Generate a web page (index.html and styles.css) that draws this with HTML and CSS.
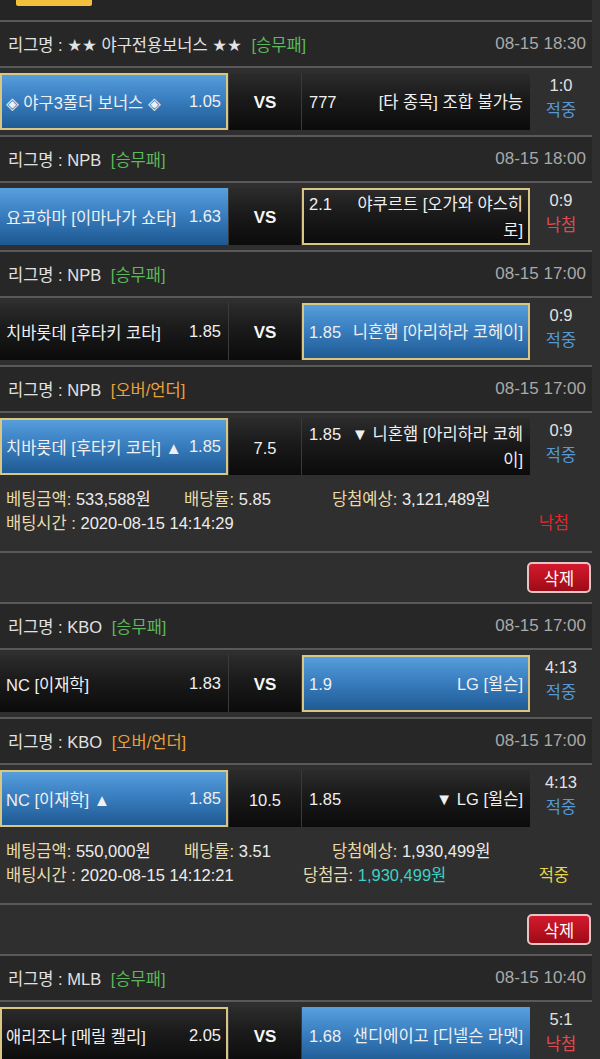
FILE: index.html
```html
<!DOCTYPE html>
<html lang="ko">
<head>
<meta charset="utf-8">
<title>베팅내역</title>
<link rel="stylesheet" href="styles.css">
</head>
<body>
<div class="page">
  <div class="topbar"><div class="tab-yellow"></div></div>

  <div class="game">
    <div class="league">
      <div class="lname">리그명 : ★★ 야구전용보너스 ★★ <span class="type wdl">[승무패]</span></div>
      <div class="date">08-15 18:30</div>
    </div>
    <div class="match">
      <div class="cell home on picked"><span class="team">◈ 야구3폴더 보너스 ◈</span><span class="odd">1.05</span></div>
      <div class="cell mid"><b>VS</b></div>
      <div class="cell away"><div class="wrap"><span class="odd">777</span>[타 종목] 조합 불가능</div></div>
      <div class="res"><span>1:0</span><span class="hit">적중</span></div>
    </div>
  </div>

  <div class="game">
    <div class="league">
      <div class="lname">리그명 : NPB <span class="type wdl">[승무패]</span></div>
      <div class="date">08-15 18:00</div>
    </div>
    <div class="match">
      <div class="cell home on"><span class="team">요코하마 [이마나가 쇼타]</span><span class="odd">1.63</span></div>
      <div class="cell mid"><b>VS</b></div>
      <div class="cell away picked"><div class="wrap"><span class="odd">2.1</span>야쿠르트 [오가와 야스히로]</div></div>
      <div class="res"><span>0:9</span><span class="miss">낙첨</span></div>
    </div>
  </div>

  <div class="game">
    <div class="league">
      <div class="lname">리그명 : NPB <span class="type wdl">[승무패]</span></div>
      <div class="date">08-15 17:00</div>
    </div>
    <div class="match">
      <div class="cell home"><span class="team">치바롯데 [후타키 코타]</span><span class="odd">1.85</span></div>
      <div class="cell mid"><b>VS</b></div>
      <div class="cell away on picked"><div class="wrap"><span class="odd">1.85</span>니혼햄 [아리하라 코헤이]</div></div>
      <div class="res"><span>0:9</span><span class="hit">적중</span></div>
    </div>
  </div>

  <div class="game">
    <div class="league">
      <div class="lname">리그명 : NPB <span class="type ou">[오버/언더]</span></div>
      <div class="date">08-15 17:00</div>
    </div>
    <div class="match">
      <div class="cell home on picked"><span class="team">치바롯데 [후타키 코타] ▲</span><span class="odd">1.85</span></div>
      <div class="cell mid"><span class="line">7.5</span></div>
      <div class="cell away"><div class="wrap"><span class="odd">1.85</span>▼ 니혼햄 [아리하라 코헤이]</div></div>
      <div class="res"><span>0:9</span><span class="hit">적중</span></div>
    </div>
    <div class="bet">
      <div class="bet-row">
        <span class="c1"><span class="lbl">베팅금액:</span> 533,588원</span>
        <span class="c2"><span class="lbl">배당률:</span> 5.85</span>
        <span class="c3"><span class="lbl">당첨예상:</span> 3,121,489원</span>
      </div>
      <div class="bet-row">
        <span class="t1"><span class="lbl">배팅시간 :</span> 2020-08-15 14:14:29</span>
        <span class="status lost">낙첨</span>
      </div>
    </div>
    <div class="del"><button class="del-btn" type="button">삭제</button></div>
  </div>

  <div class="game">
    <div class="league">
      <div class="lname">리그명 : KBO <span class="type wdl">[승무패]</span></div>
      <div class="date">08-15 17:00</div>
    </div>
    <div class="match">
      <div class="cell home"><span class="team">NC [이재학]</span><span class="odd">1.83</span></div>
      <div class="cell mid"><b>VS</b></div>
      <div class="cell away on picked"><div class="wrap"><span class="odd">1.9</span>LG [윌슨]</div></div>
      <div class="res"><span>4:13</span><span class="hit">적중</span></div>
    </div>
  </div>

  <div class="game">
    <div class="league">
      <div class="lname">리그명 : KBO <span class="type ou">[오버/언더]</span></div>
      <div class="date">08-15 17:00</div>
    </div>
    <div class="match">
      <div class="cell home on picked"><span class="team">NC [이재학] ▲</span><span class="odd">1.85</span></div>
      <div class="cell mid"><span class="line">10.5</span></div>
      <div class="cell away"><div class="wrap"><span class="odd">1.85</span>▼ LG [윌슨]</div></div>
      <div class="res"><span>4:13</span><span class="hit">적중</span></div>
    </div>
    <div class="bet">
      <div class="bet-row">
        <span class="c1"><span class="lbl">베팅금액:</span> 550,000원</span>
        <span class="c2"><span class="lbl">배당률:</span> 3.51</span>
        <span class="c3"><span class="lbl">당첨예상:</span> 1,930,499원</span>
      </div>
      <div class="bet-row">
        <span class="t1"><span class="lbl">배팅시간 :</span> 2020-08-15 14:12:21</span>
        <span class="t2"><span class="lbl">당첨금:</span> <span class="won">1,930,499원</span></span>
        <span class="status ok">적중</span>
      </div>
    </div>
    <div class="del"><button class="del-btn" type="button">삭제</button></div>
  </div>

  <div class="game">
    <div class="league">
      <div class="lname">리그명 : MLB <span class="type wdl">[승무패]</span></div>
      <div class="date">08-15 10:40</div>
    </div>
    <div class="match">
      <div class="cell home picked"><span class="team">애리조나 [메릴 켈리]</span><span class="odd">2.05</span></div>
      <div class="cell mid"><b>VS</b></div>
      <div class="cell away on"><div class="wrap"><span class="odd">1.68</span>샌디에이고 [디넬슨 라멧]</div></div>
      <div class="res"><span>5:1</span><span class="miss">낙첨</span></div>
    </div>
  </div>
</div>
</body>
</html>
```

FILE: styles.css
```css
html, body {
  margin: 0;
  padding: 0;
}

body {
  background: #2f2f2f;
  color: #e8e8e8;
  font-family: "Liberation Sans", "DejaVu Sans", "Noto Sans CJK KR", sans-serif;
  font-size: 16.5px;
}

.page {
  width: 592px;
}

.topbar {
  height: 20px;
  background: #252525;
}

.tab-yellow {
  margin-left: 16px;
  width: 76px;
  height: 6px;
  background: #f3c03e;
  border-radius: 0 0 2px 2px;
}

.game {
  border-top: 2px solid #595959;
}

.league {
  box-sizing: border-box;
  height: 46px;
  background: #272727;
  border-bottom: 2px solid #595959;
  display: flex;
  align-items: center;
  justify-content: space-between;
  padding: 0 6px 0 8px;
}

.lname {
  color: #e2e2e2;
  font-size: 16.5px;
  white-space: nowrap;
}

.type {
  margin-left: 5px;
}

.type.wdl {
  color: #5cb85a;
}

.type.ou {
  color: #e9a13a;
}

.date {
  color: #a9a9a9;
  font-size: 17px;
}

.match {
  display: flex;
  height: 57px;
  margin: 5px 0;
}

.cell {
  box-sizing: border-box;
  height: 57px;
  border: 2px solid transparent;
  background-origin: border-box;
  background-image: linear-gradient(#2c2c2c 0%, #1a1a1a 45%, #0b0b0b 100%);
  color: #f0f0f0;
}

.cell.on {
  background-image: linear-gradient(#58a0de 0%, #3a7fc1 45%, #1d5890 100%);
}

.cell.picked {
  border-color: #d8c682;
}

.home {
  width: 228px;
  display: flex;
  align-items: center;
  justify-content: space-between;
  padding: 0 5px 0 4px;
  white-space: nowrap;
}

.mid {
  width: 74px;
  border-width: 0 1px;
  border-color: #3a3a3a;
  display: flex;
  align-items: center;
  justify-content: center;
}

.mid b {
  font-size: 17px;
  font-weight: bold;
  color: #f6f6f6;
  padding-top: 2px;
}

.mid .line {
  padding-top: 4px;
}

.away {
  width: 228px;
  display: flex;
  align-items: center;
  padding: 0 5px;
}

.away .wrap {
  width: 100%;
  text-align: right;
  line-height: 26px;
}

.away .odd {
  float: left;
  margin-right: 8px;
}

.res {
  width: 62px;
  display: flex;
  flex-direction: column;
  align-items: center;
  line-height: 25px;
  color: #e2e2e2;
}

.hit {
  color: #5499d6;
}

.miss {
  color: #e04a4f;
}

.bet {
  padding: 7px 23px 16px 6px;
  line-height: 24px;
}

.bet-row {
  display: flex;
  white-space: nowrap;
  color: #ececec;
}

.lbl {
  color: #eadca8;
}

.c1 {
  width: 178px;
}

.c2 {
  width: 148px;
}

.t1 {
  width: 297px;
}

.won {
  color: #3fcfc6;
}

.status {
  margin-left: auto;
}

.status.lost {
  color: #e3262d;
}

.status.ok {
  color: #e5d648;
}

.del {
  border-top: 2px solid #595959;
  display: flex;
  justify-content: flex-end;
  padding: 9px 1px 9px 0;
}

.del-btn {
  width: 64px;
  height: 31px;
  box-sizing: border-box;
  border: 2px solid #e6c4c6;
  border-radius: 5px;
  background: linear-gradient(#d21a2e 0%, #b8111f 55%, #9c0b18 100%);
  color: #ffffff;
  font-family: "Liberation Sans", "Noto Sans CJK KR", sans-serif;
  font-size: 16.5px;
  padding: 0;
}
```
